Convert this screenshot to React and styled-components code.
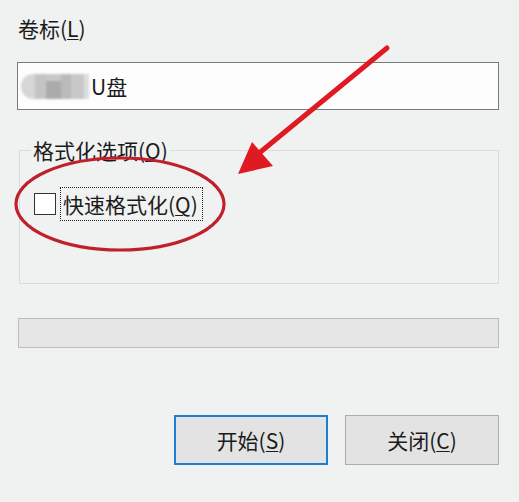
import React from 'react'
import styled, { createGlobalStyle } from 'styled-components'

const GlobalStyle = createGlobalStyle`
  html, body {
    margin: 0;
    padding: 0;
    background: #f0f1f1;
  }
  body {
    font-family: "Noto Sans CJK SC", "Noto Sans", sans-serif;
    color: #1b1b1b;
  }
`

const Dialog = styled.div`
  position: relative;
  width: 519px;
  height: 502px;
  box-sizing: border-box;
  padding: 16px 20px 0 17px;
  display: flex;
  flex-direction: column;
  font-size: 21px;
  line-height: 24px;
`

const FieldLabel = styled.div`
  padding-left: 1px;
`

const Key = styled.span`
  text-decoration: underline;
  text-underline-offset: 2px;
  text-decoration-thickness: 1px;
`

const TextBox = styled.div`
  margin-top: 22px;
  height: 48px;
  box-sizing: border-box;
  border: 1px solid #7a7a7a;
  background: #fdfdfd;
  display: flex;
  align-items: center;
  padding-left: 3px;
`

const Mosaic = styled.div`
  display: flex;
  height: 25px;
  margin-right: 2px;
  filter: blur(0.8px);
`

const Tile = styled.span`
  display: block;
  width: ${p => p.w}px;
  background: ${p => p.c};
  border-radius: ${p => (p.round ? '12px 0 0 12px' : '0')};
  box-shadow: ${p => (p.top ? `inset 0 7px 0 ${p.top}` : 'none')};
`

const Group = styled.fieldset`
  margin: 28px 0 0 2px;
  width: 480px;
  box-sizing: border-box;
  padding: 25px 0 62px 14px;
  border: 1px solid #dadbdb;
  min-inline-size: 0;
`

const Legend = styled.legend`
  margin-left: -3px;
  padding: 0 2px;
  line-height: 24px;
`

const CheckRow = styled.label`
  display: flex;
  align-items: center;
  gap: 4px;
`

const Box = styled.span`
  width: 22px;
  height: 22px;
  box-sizing: border-box;
  border: 1px solid #333;
  background: #fff;
`

const FocusText = styled.span`
  border: 1px dotted #222;
  padding: 4px 4px 4px 2px;
  line-height: 24px;
`

const Progress = styled.div`
  margin-top: 34px;
  margin-left: 1px;
  height: 30px;
  box-sizing: border-box;
  border: 1px solid #bcbcbc;
  background: #e6e6e6;
`

const Buttons = styled.div`
  margin-top: 67px;
  display: flex;
  justify-content: flex-end;
  gap: 17px;
`

const Button = styled.button`
  width: 154px;
  height: 50px;
  box-sizing: border-box;
  font: inherit;
  color: inherit;
  background: #e3e3e3;
  border: ${p => (p.primary ? '2px solid #1c7fd6' : '1px solid #adadad')};
  padding: 0;
`

const Overlay = styled.svg`
  position: absolute;
  left: 0;
  top: 0;
  pointer-events: none;
`

export default function App() {
  return (
    <Dialog>
      <GlobalStyle />
      <FieldLabel>
        卷标(<Key>L</Key>)
      </FieldLabel>
      <TextBox>
        <Mosaic>
          <Tile w={14} c="#d6d6d6" round />
          <Tile w={11} c="#c4c4c4" />
          <Tile w={15} c="#ababab" top="#c8c8c8" />
          <Tile w={10} c="#bababa" />
          <Tile w={13} c="#c8c8c8" />
          <Tile w={5} c="#dedede" />
        </Mosaic>
        U盘
      </TextBox>
      <Group>
        <Legend>
          格式化选项(<Key>O</Key>)
        </Legend>
        <CheckRow>
          <Box />
          <FocusText>
            快速格式化(<Key>Q</Key>)
          </FocusText>
        </CheckRow>
      </Group>
      <Progress />
      <Buttons>
        <Button primary>
          开始(<Key>S</Key>)
        </Button>
        <Button>
          关闭(<Key>C</Key>)
        </Button>
      </Buttons>
      <Overlay width="519" height="502" viewBox="0 0 519 502">
        <ellipse cx="120" cy="204" rx="104" ry="46" fill="none" stroke="#c0202b" strokeWidth="3.2" />
        <line x1="387" y1="48" x2="258" y2="154" stroke="#e01a22" strokeWidth="5" strokeLinecap="round" />
        <polygon points="238,174 252,142 273,166" fill="#e01a22" />
      </Overlay>
    </Dialog>
  )
}
